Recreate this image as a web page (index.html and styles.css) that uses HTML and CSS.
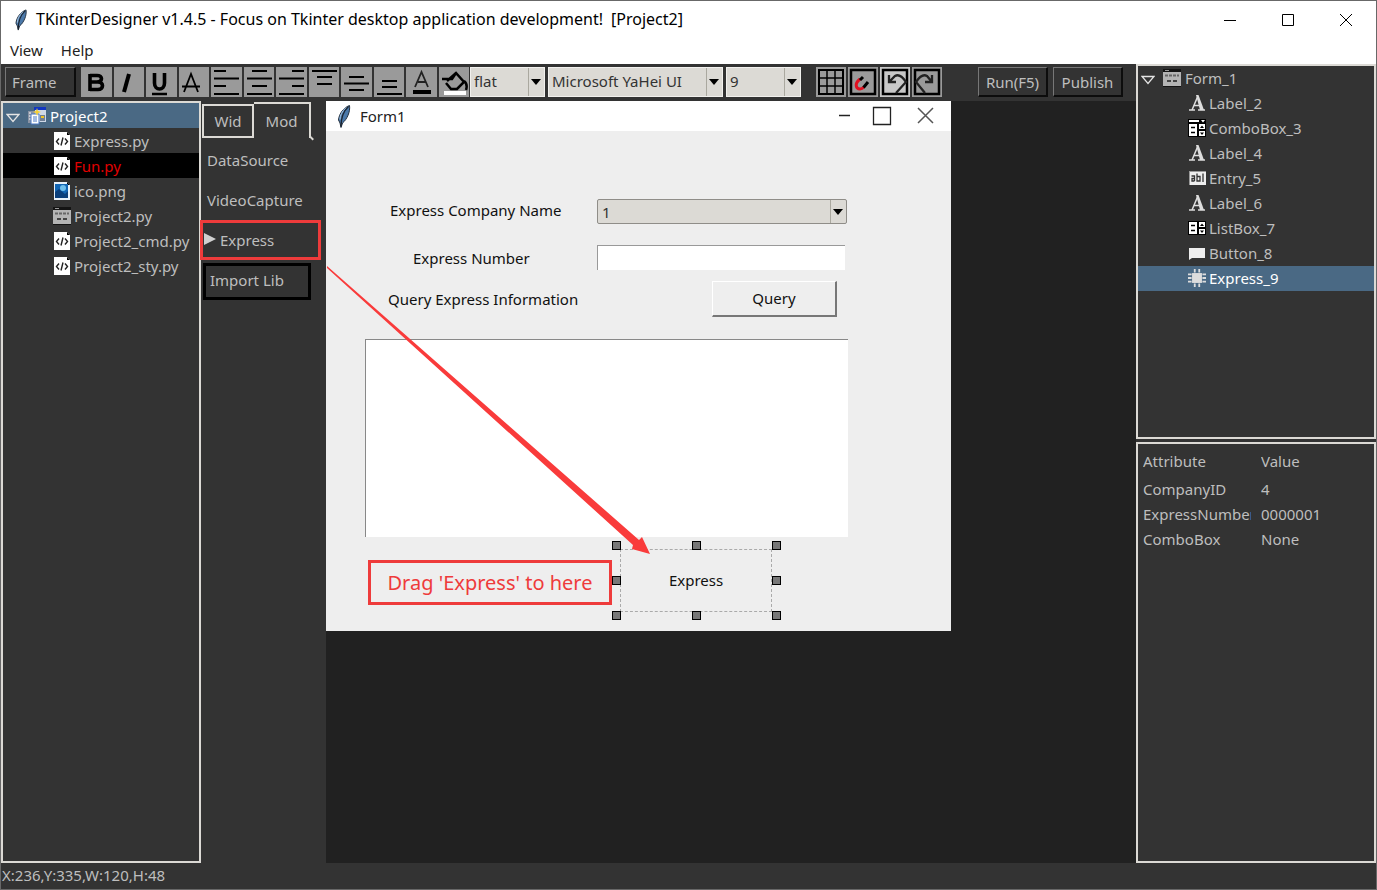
FILE: index.html
```html
<!DOCTYPE html>
<html lang="en">
<head>
<meta charset="utf-8">
<title>TKinterDesigner v1.4.5</title>
<link rel="stylesheet" href="styles.css">
</head>
<body>
<svg class="defs" aria-hidden="true">
  <symbol id="feather" viewBox="0 0 16 24">
    <path d="M13.500 1C8 3 3 9 2.500 15.500L4 18.500 5 23 6.500 18.500C11 15 14.500 7 13.500 1Z" fill="#4b79aa" stroke="#232f3d" stroke-width="1"/>
    <path d="M12.500 2C8 6 5 12 5 22" fill="none" stroke="#1b2430" stroke-width="1.300"/>
    <path d="M10 3C6 7 4 11 4 15" fill="none" stroke="#a9c8e6" stroke-width="1"/>
  </symbol>
  <symbol id="open" viewBox="0 0 14 10"><path d="M1 1.500H13L7 8.500Z" fill="none" stroke="#e4e4e4" stroke-width="1.300"/></symbol>
  <symbol id="project" viewBox="0 0 20 18">
    <path d="M8 1H19V15H8Z" fill="#cfd8e6"/><path d="M7 0H19V3H7Z" fill="#1236c0"/>
    <path d="M1 4H8V16H1Z" fill="#8a93a4"/><path d="M2 6H4M2 9H4M2 12H4" stroke="#fff"/>
    <path d="M13 8H18V14H13Z" fill="#6f7f96"/><path d="M14 9H17V11H14Z" fill="#f2c522"/>
    <path d="M4 7H12V17H4Z" fill="#fff" stroke="#4a78c4"/><path d="M6 10H10M6 12H10M6 14H10" stroke="#4a78c4"/>
    <path d="M10 1L11 4 14 5 11 6 10 9 9 6 6 5 9 4Z" fill="#f5d033"/>
  </symbol>
  <symbol id="code" viewBox="0 0 18 18">
    <path d="M1 0H14L17 3V18H1Z" fill="#fff"/><path d="M14 0V3H17Z" fill="#000"/>
    <path d="M6 6.500L3.500 9.500 6 12.500M12 6.500L14.500 9.500 12 12.500M10 5.500L8 13.500" fill="none" stroke="#222" stroke-width="1.400"/>
  </symbol>
  <symbol id="picture" viewBox="0 0 18 18">
    <path d="M1 0H14L17 3V18H1Z" fill="#e8f2fb"/><path d="M14 0V3H17Z" fill="#000"/>
    <path d="M2 2H15V16H2Z" fill="#1266b4"/><path d="M2 10L6 7 12 12 15 9V16H2Z" fill="#0a3f7c"/><circle cx="10" cy="6" r="3" fill="#6fc0ee"/>
  </symbol>
  <symbol id="window" viewBox="0 0 18 18">
    <path d="M0 0H18V18H0Z" fill="#141414"/><path d="M0 3H18V17H0Z" fill="#b4b4b4"/>
    <path d="M2 1.500H6" stroke="#999"/><path d="M2 6.500H16" stroke="#666" stroke-width="2" stroke-dasharray="3 1"/>
    <path d="M4 11H8V13H4ZM10 11H14V13H10Z" fill="#444"/>
  </symbol>
  <symbol id="label" viewBox="0 0 18 18">
    <path d="M1 16H7M10 16H17M4 16L9.500 3M6 11.500H11.500" fill="none" stroke="#ddd" stroke-width="1.500"/>
    <path d="M8 1H10.500L16 16H12Z" fill="#ddd"/>
  </symbol>
  <symbol id="combo" viewBox="0 0 18 18">
    <path d="M0 0H18V18H0Z" fill="#000"/><path d="M1 1H11V3H1ZM13 1H17L15 3.500ZM1 5H9V17H1ZM11 5H17V10H11ZM11 12H17V17H11Z" fill="#fff"/>
    <path d="M3 8.500H7M3 13.500H7" stroke="#000" stroke-width="1.500"/><path d="M12 9L14 6.500 16 9ZM12 13.500H16L14 16Z" fill="#000"/>
  </symbol>
  <symbol id="list" viewBox="0 0 18 18">
    <path d="M0 2H18V16H0Z" fill="#000"/><path d="M1 3H9V15H1ZM11 3H17V8H11ZM11 10H17V15H11Z" fill="#fff"/>
    <path d="M3 6.500H7M3 11.500H7" stroke="#000" stroke-width="1.500"/><path d="M12 7L14 4.500 16 7ZM12 11.500H16L14 14Z" fill="#000"/>
  </symbol>
  <symbol id="entry" viewBox="0 0 18 18">
    <path d="M1 2H18V16H1Z" fill="#eee"/><path d="M1 2H18V3H2V16H1Z" fill="#999"/>
    <path d="M3.500 7H6.500V12M6.500 9.500H4V12H6.500M9 4.500V12H12V7.500H9M15 4.500V13" fill="none" stroke="#333" stroke-width="1.300"/>
  </symbol>
  <symbol id="btn" viewBox="0 0 18 18"><path d="M1 4H17V14H4L1 16Z" fill="#eee"/></symbol>
  <symbol id="chip" viewBox="0 0 20 20">
    <path d="M4.500 4.500H15.500V15.500H4.500Z" fill="#ddd"/><path d="M7.500 0V4M12.500 0V4M7.500 16V20M12.500 16V20M0 6H4M0 10H4M0 14H4M16 6H20M16 10H20M16 14H20" stroke="#ddd" stroke-width="2"/>
  </symbol>
  <symbol id="down" viewBox="0 0 10 6"><path d="M0 0H10L5 6Z" fill="#000"/></symbol>
</svg>

<div class="app">
  <header class="titlebar">
    <svg class="logo"><use href="#feather"/></svg>
    <h1 class="caption">TKinterDesigner v1.4.5 - Focus on Tkinter desktop application development!</h1>
    <span class="caption project-name">[Project2]</span>
    <div class="window-buttons">
      <button aria-label="Minimize"><svg viewBox="0 0 14 14"><path d="M1 7.500H13"/></svg></button>
      <button aria-label="Maximize"><svg viewBox="0 0 14 14"><path d="M1.500 1.500H12.500V12.500H1.500Z"/></svg></button>
      <button aria-label="Close"><svg viewBox="0 0 14 14"><path d="M1 1L13 13M13 1L1 13"/></svg></button>
    </div>
  </header>
  <nav class="menubar"><button>View</button><button>Help</button></nav>

  <div class="workspace">
    <div class="main">
      <div class="toolbar">
        <button class="raised frame-button">Frame</button>
        <div class="format-group">
          <button aria-label="Bold"><svg viewBox="0 0 30 30"><path d="M9 7V24M9 8.500H16C22 8.500 22 15 16 15H9M9 15H17C23 15 23 22.500 17 22.500H9" stroke-width="3.600"/></svg></button>
          <button aria-label="Italic"><svg viewBox="0 0 30 30"><path d="M15 7L10 25" stroke-width="4"/></svg></button>
          <button aria-label="Underline"><svg viewBox="0 0 30 30"><path d="M8.500 6V16C8.500 24 18.500 24 18.500 16V6" stroke-width="3.600"/><path d="M6 27H21" stroke-width="2.500"/></svg></button>
          <button aria-label="Strikethrough"><svg viewBox="0 0 30 30"><path d="M5 25L12 7 19 25M3 19.500H21" stroke-width="1.800"/></svg></button>
          <button aria-label="Align left"><svg viewBox="0 0 30 30"><path d="M3 4H15M3 11.500H28M3 19H15M3 27H28"/></svg></button>
          <button aria-label="Align center"><svg viewBox="0 0 30 30"><path d="M8 4H23M3 11.500H28M8 19H23M3 27H28"/></svg></button>
          <button aria-label="Align right"><svg viewBox="0 0 30 30"><path d="M16 4H28M3 11.500H28M16 19H28M3 27H28"/></svg></button>
          <button aria-label="Align top"><svg viewBox="0 0 30 30"><path d="M3 4H28M8 10H23M8 17H23"/></svg></button>
          <button aria-label="Align middle"><svg viewBox="0 0 30 30"><path d="M8 10H23M3 16.500H28M8 23H23"/></svg></button>
          <button aria-label="Align bottom"><svg viewBox="0 0 30 30"><path d="M8 14H23M8 20H23M3 27H28"/></svg></button>
          <button aria-label="Text colour"><svg viewBox="0 0 30 30"><path d="M9 20L15.500 5 22 20M12 15H20" stroke="#222" stroke-width="1.800"/><path d="M7 25H25" stroke-width="4"/></svg></button>
          <button aria-label="Fill colour"><svg viewBox="0 0 30 30"><path d="M5 26H27" stroke="#fff" stroke-width="4"/><path d="M8 14L17 6 25 15 18 22H12L7 16M3 12H13L17 6M25 14Q29 17 27 23" stroke-width="2.500"/></svg></button>
        </div>
        <div class="select-group">
          <span class="combo combo-relief"><select aria-label="Relief"><option>flat</option></select><svg><use href="#down"/></svg></span>
          <span class="combo combo-font"><select aria-label="Font"><option>Microsoft YaHei UI</option></select><svg><use href="#down"/></svg></span>
          <span class="combo combo-size"><select aria-label="Font size"><option>9</option></select><svg><use href="#down"/></svg></span>
        </div>
        <div class="edit-group">
          <button aria-label="Grid"><svg viewBox="0 0 30 30"><path d="M3 3H27V27H3Z" stroke-width="2"/><path d="M11 3V27M19 3V27M3 11H27M3 19H27" stroke-width="1.500"/></svg></button>
          <button aria-label="Snap"><svg viewBox="0 0 30 30"><path d="M3 3H27V27H3Z" stroke-width="2.500"/><path d="M12 12C6 17 8 22 12 22Q14 22 16 20" stroke="#e01020" stroke-width="3"/><path d="M12 13L15 10M15.500 20.500L20 15" stroke-width="3"/></svg></button>
          <button class="lit" aria-label="Undo"><svg viewBox="0 0 30 30"><path d="M3 3H27V27H3Z" stroke-width="2.500"/><path d="M9 8V15H16M9 15L15 9Q20 6 26 15L16 26" stroke="#222" stroke-width="2.300"/></svg></button>
          <button aria-label="Redo"><svg viewBox="0 0 30 30"><path d="M3 3H27V27H3Z" stroke-width="2.500"/><path d="M20 8V15H13M20 15L15 9Q10 6 4 15L13 26" stroke="#222" stroke-width="2.300"/></svg></button>
        </div>
        <div class="run-group"><button class="raised">Run(F5)</button><button class="raised">Publish</button></div>
      </div>

      <div class="columns">
        <section class="panel files">
          <ul class="tree">
            <li class="root selected"><svg class="expander"><use href="#open"/></svg><svg class="icon"><use href="#project"/></svg>Project2</li>
            <li><svg class="icon"><use href="#code"/></svg>Express.py</li>
            <li class="active"><svg class="icon"><use href="#code"/></svg>Fun.py</li>
            <li><svg class="icon"><use href="#picture"/></svg>ico.png</li>
            <li><svg class="icon"><use href="#window"/></svg>Project2.py</li>
            <li><svg class="icon"><use href="#code"/></svg>Project2_cmd.py</li>
            <li><svg class="icon"><use href="#code"/></svg>Project2_sty.py</li>
          </ul>
        </section>

        <section class="palette">
          <div class="tabs"><button class="tab">Wid</button><button class="tab current">Mod</button></div>
          <button class="module">DataSource</button>
          <button class="module">VideoCapture</button>
          <button class="module marked"><svg viewBox="0 0 14 14"><path d="M1 0L13 6 1 12Z" fill="#d0d0d0"/></svg>Express</button>
          <button class="import">Import Lib</button>
        </section>

        <main class="stage">
          <div class="form">
            <div class="form-title">
              <svg class="logo"><use href="#feather"/></svg><span>Form1</span>
              <svg class="form-controls" viewBox="0 0 96 20"><path d="M0 9.500H11" stroke="#222" stroke-width="1.500"/><path d="M34.500 1.500H51.500V18.500H34.500Z" fill="none" stroke="#222" stroke-width="1.300"/><path d="M79 2L94 17M94 2L79 17" stroke="#555" stroke-width="1.500"/></svg>
            </div>
            <div class="form-body">
              <div class="field"><label class="company" for="company">Express Company Name</label>
                <span class="combo combo-company"><select id="company"><option>1</option></select><svg><use href="#down"/></svg></span></div>
              <div class="field"><label class="number" for="number">Express Number</label><input id="number" type="text"></div>
              <div class="field query-row"><span class="query-label">Query Express Information</span><button class="query">Query</button></div>
              <div class="listbox"></div>
              <div class="drop-row">
                <p class="callout">Drag 'Express' to here</p>
                <div class="widget"><span>Express</span>
                  <i class="h nw"></i><i class="h n"></i><i class="h ne"></i><i class="h w"></i><i class="h e"></i><i class="h sw"></i><i class="h s"></i><i class="h se"></i>
                </div>
              </div>
            </div>
          </div>
          <svg class="arrow" viewBox="0 0 330 460"><path d="M1 165L313 439 316 436 324 453 306 448 307 444 1 167Z" fill="#f93b3b"/></svg>
        </main>
      </div>
    </div>

    <aside class="inspector">
      <section class="panel widgets">
        <ul class="tree">
          <li class="root"><svg class="expander"><use href="#open"/></svg><svg class="icon"><use href="#window"/></svg>Form_1</li>
          <li><svg class="icon"><use href="#label"/></svg>Label_2</li>
          <li><svg class="icon"><use href="#combo"/></svg>ComboBox_3</li>
          <li><svg class="icon"><use href="#label"/></svg>Label_4</li>
          <li><svg class="icon"><use href="#entry"/></svg>Entry_5</li>
          <li><svg class="icon"><use href="#label"/></svg>Label_6</li>
          <li><svg class="icon"><use href="#list"/></svg>ListBox_7</li>
          <li><svg class="icon"><use href="#btn"/></svg>Button_8</li>
          <li class="selected"><svg class="icon"><use href="#chip"/></svg>Express_9</li>
        </ul>
      </section>
      <section class="panel attributes">
        <table>
          <thead><tr><th>Attribute</th><th>Value</th></tr></thead>
          <tbody>
            <tr><td>CompanyID</td><td>4</td></tr>
            <tr><td>ExpressNumber</td><td>0000001</td></tr>
            <tr><td>ComboBox</td><td>None</td></tr>
          </tbody>
        </table>
      </section>
    </aside>
  </div>
  <footer class="status">X:236,Y:335,W:120,H:48</footer>
</div>
</body>
</html>
```
FILE: styles.css
```css
* { box-sizing: border-box; }
body {
  margin: 0;
  font: 15px/20px "Noto Sans", "Open Sans", sans-serif;
  color: #bebebe;
  background: #333;
}
button, select, input { font: inherit; color: inherit; border-radius: 0; }
button { padding: 0; border: 0; background: none; }
ul { margin: 0; padding: 0; list-style: none; }
.defs { position: absolute; width: 0; height: 0; }

.app {
  display: flex;
  flex-direction: column;
  min-height: 100vh;
  border: 1px solid #686868;
}

.titlebar {
  display: flex;
  align-items: center;
  height: 38px;
  padding-left: 12px;
  background: #fff;
  color: #000;
}
.logo { width: 16px; height: 22px; }
.caption { margin: 0 0 0 7px; padding-bottom: 2px; font-size: 16px; font-weight: 400; white-space: nowrap; }
.project-name { margin-left: 8px; }
.window-buttons { display: flex; margin: 0 1px 0 auto; }
.window-buttons button { display: grid; place-items: center; width: 58px; height: 38px; }
.window-buttons svg { width: 14px; height: 14px; fill: none; stroke: #000; }
.menubar { display: flex; gap: 18px; height: 25px; padding: 0 0 3px 9px; background: #fff; color: #222; }

.workspace { display: flex; flex: 1; }
.main { display: flex; flex-direction: column; flex: 1; min-width: 0; }

.toolbar { display: flex; align-items: center; height: 37px; padding: 0 0 1px 4px; }
.raised {
  height: 30px;
  border: 1px solid #777;
  border-right: 2px solid #0c0c0c;
  border-bottom: 2px solid #0c0c0c;
  background: #333;
}
.frame-button { width: 71px; padding-left: 6px; text-align: left; }
.format-group { display: grid; grid-template-columns: repeat(12, 1fr); gap: 2px; width: 388px; margin-left: 5px; }
.format-group button, .edit-group button { height: 30px; background: #9a9a9a; }
.format-group svg, .edit-group svg { display: block; width: 30px; height: 30px; fill: none; stroke: #000; stroke-width: 2; }
.select-group { display: flex; gap: 3px; margin-left: 1px; }
.combo { position: relative; display: block; height: 30px; color: #333; }
.combo select {
  width: 100%;
  height: 100%;
  padding: 0 3px 2px;
  border: 1px solid #f2f1ee;
  appearance: none;
  background: linear-gradient(#aaa89f, #aaa89f) right 15px top / 1px 100% no-repeat #dcdad5;
}
.combo svg { position: absolute; top: 50%; right: 4px; width: 10px; height: 6px; margin-top: -3px; pointer-events: none; }
.combo-relief, .combo-size { width: 75px; }
.combo-font { width: 175px; }
.edit-group { display: flex; gap: 2px; margin-left: 15px; }
.edit-group button { width: 30px; }
.edit-group .lit { background: #c8c8c8; }
.run-group { display: flex; gap: 5px; margin-left: 36px; }
.run-group button { width: 70px; }

.columns { display: flex; flex: 1; }
.panel { border: 2px solid #dcdad5; background: #333; }
.files { width: 200px; flex: none; }
.tree li { display: flex; align-items: center; height: 25px; padding-left: 50px; white-space: nowrap; }
.tree .root { padding-left: 3px; }
.expander { width: 14px; height: 10px; margin: 4px 7px 0 0; }
.icon { flex: none; width: 18px; height: 18px; margin-right: 3px; }
.root .icon { width: 20px; }
.tree .selected { background: #4a6984; color: #fff; }
.tree .active { background: #000; color: #e00000; }

.palette { width: 125px; flex: none; padding-top: 1px; }
.palette button { display: block; }
.tabs { display: flex; align-items: flex-end; height: 36px; margin: 0 0 2px 1px; }
.tabs .tab { width: 52px; height: 34px; border: 2px solid #dcdad5; }
.tabs .current { position: relative; width: 57px; height: 36px; border-width: 2px 2px 0 0; }
.current::after {
  content: "";
  position: absolute;
  right: -5px;
  bottom: -1px;
  width: 5px;
  height: 2px;
  background: #dcdad5;
  transform: rotate(45deg);
}
.module { height: 40px; padding-left: 6px; }
.palette .marked {
  display: flex;
  align-items: center;
  width: 121px;
  border: 3px solid #ee3b3b;
  padding: 0;
  margin-left: -1px;
}
.marked svg { width: 14px; height: 14px; margin-right: 3px; }
.palette .import {
  width: 108px;
  height: 37px;
  margin: 3px 0 0 2px;
  padding: 0 0 3px 4px;
  border: 3px solid #000;
  text-align: left;
}

.stage { position: relative; flex: 1; background: #212121; color: #111; }
.form { width: 625px; background: #eee; }
.form-title { display: flex; align-items: center; height: 30px; padding: 0 16px 0 10px; background: #fff; color: #222; }
.form-title .logo { height: 25px; }
.form-title span { margin-left: 8px; }
.form-controls { width: 96px; height: 20px; margin-left: auto; }
.form-body { padding: 68px 0 10px 39px; }
.field { display: flex; align-items: center; height: 25px; margin-bottom: 21px; }
.field label { width: 232px; }
.field .company { padding: 0 0 4px 25px; }
.field .number { padding-left: 48px; }
.combo-company { width: 250px; height: 25px; }
.combo-company select { border: 1px solid #8f8d88; border-radius: 2px; padding: 0 4px; }
.field input { width: 248px; height: 25px; border: 0 solid #999; border-width: 1px 0 0 1px; background: #fff; }
.query-row { height: 36px; margin: -10px 0 22px; }
.query-label { width: 347px; padding-left: 23px; }
.query { width: 125px; height: 36px; padding-bottom: 2px; border: 1px solid #fff; border-right: 2px solid #777; border-bottom: 2px solid #777; background: #eee; }
.listbox { width: 483px; height: 198px; border: 0 solid #888; border-width: 1px 0 0 1px; background: #fff; }
.drop-row { display: flex; align-items: flex-start; padding: 12px 0 9px 3px; }
.callout { width: 244px; margin: 11px 8px 0 0; padding: 7px 0 6px; border: 3px solid #ee3b3b; color: #ee3b3b; font-size: 20px; line-height: 26px; text-align: center; }
.widget { position: relative; display: grid; place-items: center; width: 152px; height: 63px; padding-bottom: 2px; border: 1px dashed #aaa; }
.h { position: absolute; width: 9px; height: 9px; border: 1px solid #000; background: #777; }
.nw, .n, .ne { top: -9px; }
.w, .e { top: 26px; }
.sw, .s, .se { bottom: -9px; }
.nw, .w, .sw { left: -9px; }
.n, .s { left: 71px; }
.ne, .e, .se { right: -10px; }
.arrow { position: absolute; left: 0; top: 0; width: 330px; height: 460px; pointer-events: none; }

.inspector { display: flex; flex-direction: column; gap: 3px; width: 240px; flex: none; }
.widgets { height: 375px; }
.widgets li { padding-bottom: 1px; }
.attributes { flex: 1; padding: 3px 5px; }
.attributes table { border-spacing: 0; table-layout: fixed; width: 100%; }
.attributes th, .attributes td { height: 25px; padding: 0; overflow: hidden; font-weight: 400; text-align: left; white-space: nowrap; }
.attributes th { height: 29px; padding-bottom: 2px; }
.attributes th:first-child { width: 118px; }
.attributes td:first-child { border-right: 10px solid #333; }

.status { height: 26px; padding: 2px 1px; }
```
